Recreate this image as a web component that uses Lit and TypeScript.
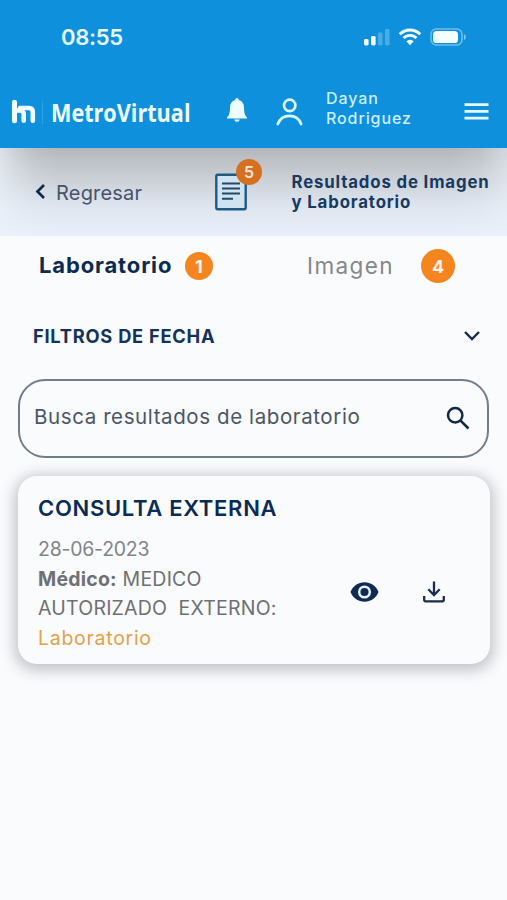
import { LitElement, html, css } from "lit";
import { customElement } from "lit/decorators.js";

@customElement("status-bar")
class StatusBar extends LitElement {
  static styles = css`
    :host { display: flex; align-items: center; height: 74px; padding: 0 40px 0 61px; color: #e6fbff; box-sizing: border-box; }
    .time { font-size: 22px; font-weight: 600; letter-spacing: -0.3px; flex: 1; }
    svg { display: block; }
  `;
  render() {
    return html`
      <span class="time">08:55</span>
      <svg width="104" height="20" viewBox="0 0 104 20" fill="#f4feff">
        <rect x="1" y="12" width="4.6" height="6.4" rx="1.4" />
        <rect x="8" y="9" width="4.6" height="9.4" rx="1.4" />
        <rect x="15" y="5.5" width="4.6" height="12.9" rx="1.4" opacity=".25" />
        <rect x="22" y="2" width="4.6" height="16.4" rx="1.4" opacity=".25" />
        <g fill="none" stroke="#f4feff" stroke-width="2.9">
          <path d="M36.8 7.2a14.4 14.4 0 0 1 20.4 0" />
          <path d="M40.6 11a9 9 0 0 1 12.8 0" />
        </g>
        <path d="M43.3 14.2a5.3 5.3 0 0 1 7.4 0L47 18.3z" />
        <rect x="68" y="2" width="31" height="16" rx="5.4" fill="none" stroke="#f4feff" stroke-opacity=".42" stroke-width="1.5" />
        <rect x="70" y="4" width="25" height="12" rx="3.6" />
        <path d="M101 7.3c2.4.8 2.4 4.8 0 5.6z" opacity=".5" />
      </svg>
    `;
  }
}

@customElement("app-header")
class AppHeader extends LitElement {
  static styles = css`
    :host { display: flex; align-items: center; height: 74px; padding: 0 18px 0 11px; box-sizing: border-box; color: #effcff; }
    svg { display: block; flex: none; }
    .brand { display: flex; align-items: center; width: 214px; padding-top: 2px; }
    .rule { width: 1px; height: 23px; margin: 0 8px 0 6px; background: #2fa2e5; }
    .name { font: 700 25px/28px "Open Sans", sans-serif; white-space: nowrap; transform: scaleX(0.865); transform-origin: left; }
    .bell { margin-right: 27px; margin-bottom: 3px; }
    .person { margin-right: 23px; margin-top: 2px; }
    .user { flex: 1; font-size: 16px; line-height: 19.5px; font-weight: 500; letter-spacing: 0.9px; color: #c9efff; margin-bottom: 5px; }
  `;
  render() {
    return html`
      <div class="brand">
        <svg width="25" height="26" viewBox="0 0 25 26" fill="none" stroke="#effcff" stroke-width="5" stroke-linecap="round">
          <path d="M3.500 3.200v18.600" />
          <path d="M3.500 14.500c0-4.200 9.200-4.200 9.200 0v7.300" stroke-width="4.600" />
          <path d="M9 9h9c2.500 0 3.800 1.600 3.800 4v8.800" stroke-width="4.600" />
        </svg>
        <span class="rule"></span>
        <span class="name">MetroVirtual</span>
      </div>
      <svg class="bell" width="24" height="26" viewBox="0 0 24 26" fill="#effcff">
        <path d="M12 1c1.1 0 1.7.8 1.8 1.9 3.4 1 5.1 3.800 5.200 7.300.1 6.200.9 8 3 10.200V21.500H2V20.400c2.100-2.200 2.900-4 3-10.200.1-3.500 1.800-6.300 5.200-7.300C10.300 1.800 10.900 1 12 1z" />
        <path d="M9.400 22.500h5.200a2.600 2.300 0 0 1-5.200 0z" />
      </svg>
      <svg class="person" width="27" height="28" viewBox="0 0 27 28" fill="none" stroke="#d9f8ff" stroke-width="2.700" stroke-linecap="round">
        <circle cx="13.700" cy="7.400" r="5.700" />
        <path d="M1.800 26C3.800 20.700 8.300 17.800 13.500 17.800S23.200 20.700 25.200 26" />
      </svg>
      <div class="user">Dayan<br />Rodriguez</div>
      <svg width="25" height="18" viewBox="0 0 25 18" fill="#e6fbff">
        <path d="M.5 1.200h24v2.700H.5zM.5 8h24v2.700H.5zM.5 14.800h24v2.700H.5z" />
      </svg>
    `;
  }
}

@customElement("page-title")
class PageTitle extends LitElement {
  static styles = css`
    :host { display: flex; align-items: center; height: 88px; box-sizing: border-box; padding: 0 16px 0 35px;
      background: linear-gradient(to bottom, #b3b7bb 0, #bcc0c4 12%, #cdd2d9 38%, #dee5ef 66%, #e9f0fb 100%); position: relative; }
    :host::before { content: ""; position: absolute; inset: 0;
      background: linear-gradient(to right, rgba(236, 242, 250, 0.7) 0, rgba(236, 242, 250, 0.4) 16px, rgba(236, 242, 250, 0.12) 36px, rgba(236, 242, 250, 0) 60px, rgba(236, 242, 250, 0) 450px, rgba(236, 242, 250, 0.15) 480px, rgba(236, 242, 250, 0.55) 100%); }
    .back, .doc, .title { position: relative; }
    svg { display: block; }
    .back { display: flex; align-items: center; gap: 10px; width: 180px; color: #46536a; font-size: 20px; letter-spacing: 0.2px; padding-top: 1px; }
    .doc { width: 32px; }
    .badge { position: absolute; left: 21px; top: -14px; width: 26px; height: 26px; border-radius: 50%; background: #d66f1e;
      color: #f3e3dc; font-size: 16px; font-weight: 600; line-height: 27px; text-align: center; }
    .title { margin-left: 44.500px; font-size: 16.800px; line-height: 20px; font-weight: 700; color: #163a60; letter-spacing: 0.85px; white-space: nowrap; }
  `;
  render() {
    return html`
      <div class="back">
        <svg width="11" height="17" viewBox="0 0 11 17" fill="none" stroke="#12284a" stroke-width="2.700"><path d="M9 1 2.500 7.500 9 14" /></svg>
        Regresar
      </div>
      <div class="doc">
        <svg width="32" height="38" viewBox="0 0 32 38" fill="none">
          <rect x="1.300" y="1.800" width="29.400" height="34.400" rx="1.500" fill="#cfe3f1" stroke="#1f5a82" stroke-width="2.400" />
          <path d="M7 10.500h18M7 15.500h18M7 20.500h18M7 25.700h11" stroke="#244866" stroke-width="2.100" />
        </svg>
        <span class="badge">5</span>
      </div>
      <div class="title">Resultados de Imagen<br />y Laboratorio</div>
    `;
  }
}

@customElement("result-tabs")
class ResultTabs extends LitElement {
  static styles = css`
    :host { display: flex; align-items: center; height: 59px; padding-left: 39px; box-sizing: border-box; font-size: 22px; }
    .active { width: 146px; font-weight: 700; color: #0d2a50; letter-spacing: 0.85px; }
    .other { width: 114px; margin-left: 94px; color: #85878b; font-size: 22.500px; letter-spacing: 1.400px; }
    .active, .other { padding-bottom: 1px; box-sizing: border-box; }
    .count { border-radius: 50%; background: #f5851f; color: #fff4e6; font-weight: 700; text-align: center; font-size: 18px; }
    .small { width: 28px; height: 28px; line-height: 29px; }
    .large { width: 34px; height: 34px; line-height: 35px; }
  `;
  render() {
    return html`
      <span class="active">Laboratorio</span><span class="count small">1</span>
      <span class="other">Imagen</span><span class="count large">4</span>
    `;
  }
}

@customElement("search-filters")
class SearchFilters extends LitElement {
  static styles = css`
    :host { display: block; padding: 0 18px; }
    svg { display: block; }
    .dates { display: flex; align-items: center; justify-content: space-between; height: 84px; padding: 0 8px 2px 15px;
      font-size: 18.300px; font-weight: 700; color: #16325a; box-sizing: border-box; letter-spacing: 0.75px; }
    .search { display: flex; align-items: center; justify-content: space-between; height: 79px; box-sizing: border-box;
      border: 2px solid #727d8c; border-radius: 27px; padding: 0 17px 4px 14px; font-size: 20.500px; color: #4b5566; letter-spacing: 0.6px; }
    .lens { margin-top: 3px; }
  `;
  render() {
    return html`
      <div class="dates">
        FILTROS DE FECHA
        <svg width="18" height="12" viewBox="0 0 18 12" fill="none" stroke="#152b45" stroke-width="2.400"><path d="M2 2l7 7 7-7" /></svg>
      </div>
      <div class="search">
        Busca resultados de laboratorio
        <svg class="lens" width="24" height="24" viewBox="0 0 24 24" fill="none" stroke="#14283f" stroke-width="2.500">
          <circle cx="9.200" cy="9.200" r="7.200" /><path d="M14.300 14.300 22.500 22.500" />
        </svg>
      </div>
    `;
  }
}

@customElement("result-card")
class ResultCard extends LitElement {
  static styles = css`
    :host { display: flex; margin: 18px 17px 0 18px; height: 188px; box-sizing: border-box; border-radius: 19px;
      background: #fafbfd; box-shadow: 0 3px 14px 4px rgba(40, 45, 55, 0.25); padding: 18px 45px 0 20px; }
    .info { width: 312px; flex: none; font-size: 19.500px; line-height: 29.700px; color: #6e7073; }
    .heading { font-size: 22px; line-height: 28px; font-weight: 600; color: #0b2b55; margin-bottom: 13px; letter-spacing: 0.7px; }
    .line { white-space: pre; letter-spacing: 0.220px; }
    .date { color: #838487; letter-spacing: -0.250px; }
    .label { font-weight: 700; }
    .kind { color: #e5a04a; letter-spacing: 0.720px; }
    .actions { flex: 1; display: flex; justify-content: space-between; align-items: center; margin-top: 87px; height: 22px; }
    svg { display: block; }
  `;
  render() {
    return html`
      <div class="info">
        <div class="heading">CONSULTA EXTERNA</div>
        <div class="line date">28-06-2023</div>
        <div class="line"><span class="label">Médico:</span> MEDICO</div>
        <div class="line">AUTORIZADO  EXTERNO:</div>
        <div class="line kind">Laboratorio</div>
      </div>
      <div class="actions">
        <svg width="29" height="20" viewBox="0 0 29 20">
          <path d="M.5 10C3 3.800 8.300.3 14.500.3S26 3.800 28.500 10C26 16.200 20.700 19.700 14.500 19.700S3 16.200.5 10z" fill="#0d2b55" />
          <circle cx="14.500" cy="10" r="5.300" fill="#0d2b55" stroke="#e8f1f8" stroke-width="2.500" />
        </svg>
        <svg width="22" height="22" viewBox="0 0 22 22" fill="none" stroke="#1b2c4c" stroke-width="2.300">
          <path d="M11 .5v13M5.300 8.300l5.700 5.700 5.700-5.700M1.200 15v3.800c0 1 .6 1.600 1.600 1.600h16.400c1 0 1.600-.6 1.600-1.600V15" />
        </svg>
      </div>
    `;
  }
}

@customElement("app-root")
class AppRoot extends LitElement {
  static styles = css`
    :host { display: block; height: 900px; background: #f9fbfd; font-family: Inter, "Liberation Sans", sans-serif; overflow: hidden; }
    .top { height: 148px; background: #0f90dc; }
  `;
  render() {
    return html`
      <div class="top"><status-bar></status-bar><app-header></app-header></div>
      <page-title></page-title>
      <result-tabs></result-tabs>
      <search-filters></search-filters>
      <result-card></result-card>
    `;
  }
}
